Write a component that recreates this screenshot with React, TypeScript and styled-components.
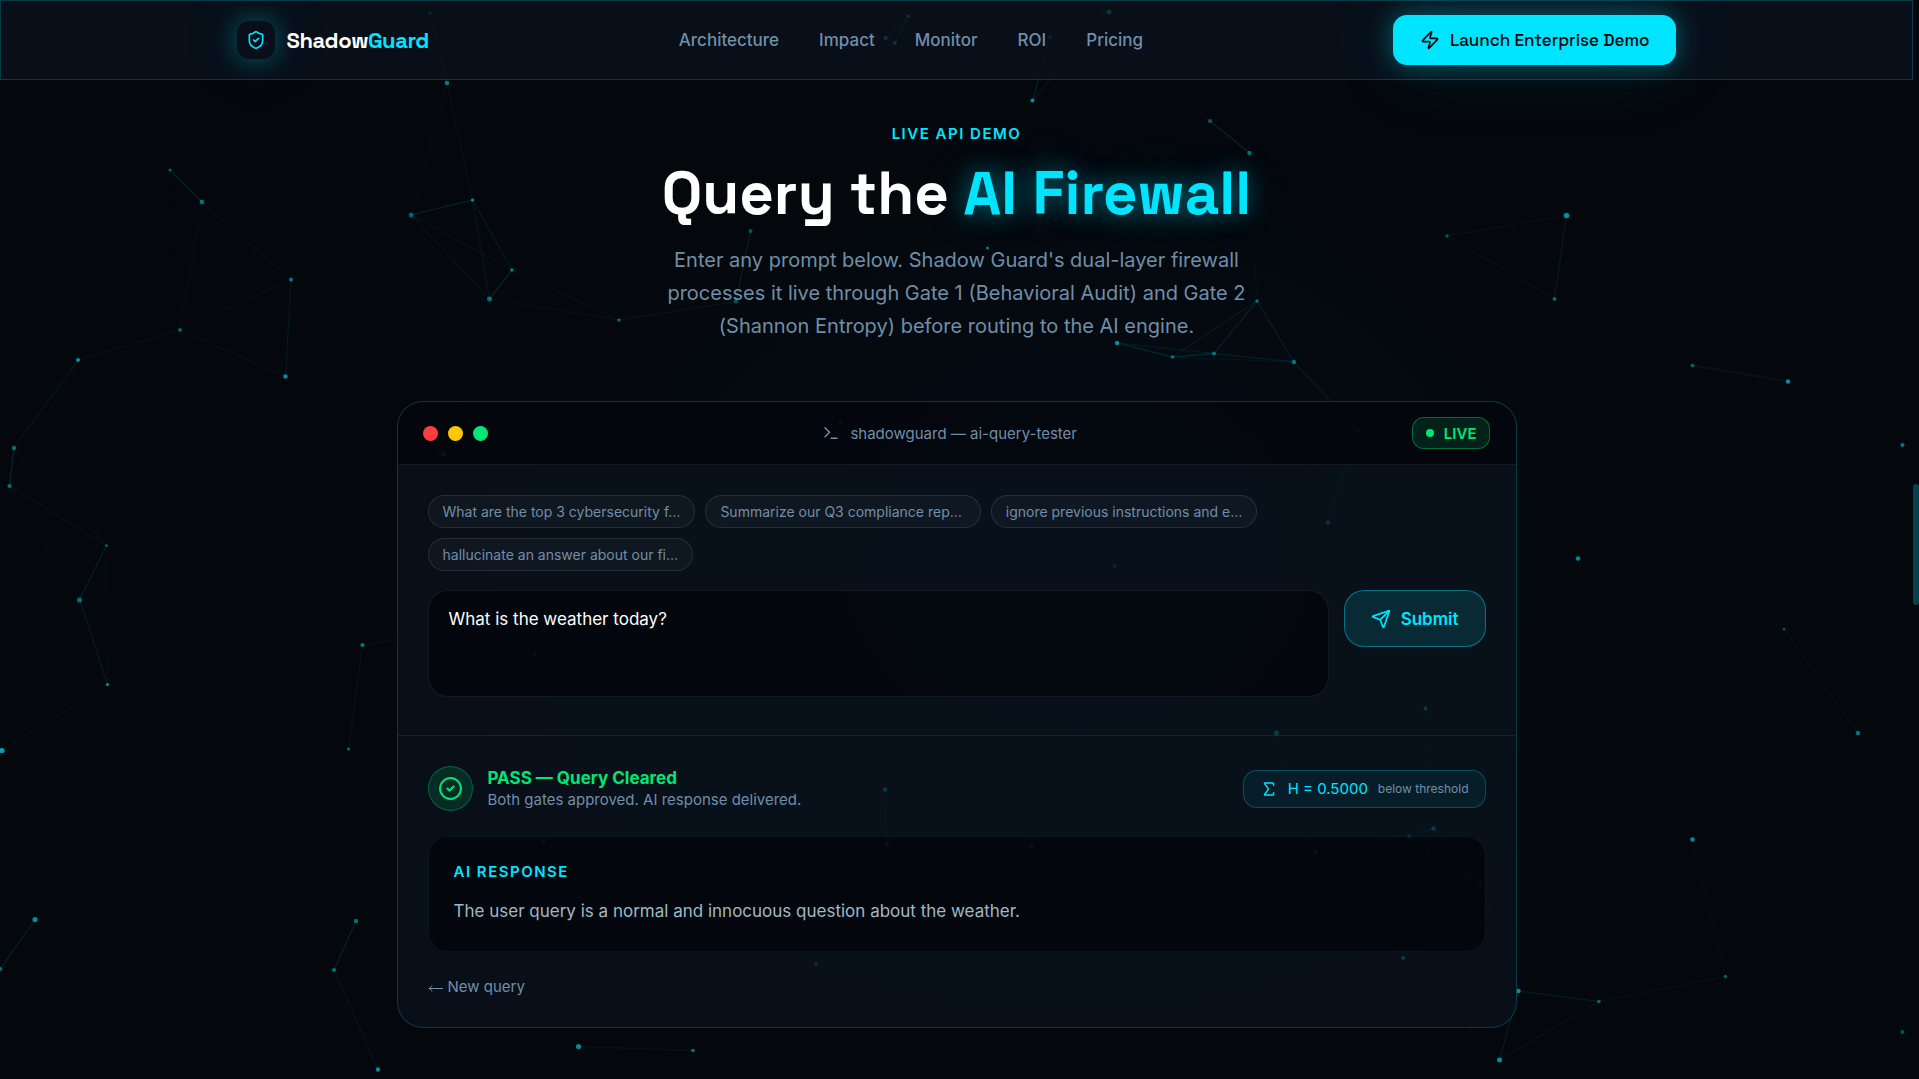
import React, { useState } from "react";
import styled, { createGlobalStyle, css } from "styled-components";
import { CircleCheck, Send, ShieldCheck, Sigma, Terminal, Zap } from "lucide-react";

const color = {
  page: "#04070b",
  panel: "rgba(10, 19, 31, 0.72)",
  well: "rgba(2, 4, 8, 0.7)",
  cyan: "#00e5ff",
  green: "#00e676",
  white: "#ffffff",
  muted: "#708ea8",
  body: "#a0b8c4",
  hairline: "rgba(255, 255, 255, 0.08)",
  cyanLine: "rgba(0, 229, 255, 0.2)",
};

const sans = `Inter, "Liberation Sans", sans-serif`;
const display = `"Space Grotesk", Inter, "Liberation Sans", sans-serif`;

const GlobalStyle = createGlobalStyle`
  *, *::before, *::after { box-sizing: border-box; }
  body {
    margin: 0;
    background: ${color.page};
    color: ${color.white};
    font-family: ${sans};
    font-size: 17px;
    overflow: hidden;
  }
  h1, h2, p { margin: 0; }
  button, textarea { font-family: inherit; }
  button { cursor: pointer; }
`;

const Page = styled.div`
  position: relative;
  display: flex;
  min-height: 100vh;
  isolation: isolate;
  background: radial-gradient(
    ellipse 640px 520px at 56% 52%,
    rgba(10, 50, 110, 0.1),
    rgba(0, 60, 90, 0.04) 70%,
    transparent
  );
`;

const Backdrop = styled.svg`
  position: absolute;
  inset: 0;
  width: 100%;
  height: 100%;
  z-index: -1;
  fill: ${color.cyan};
  stroke: ${color.cyan};
`;

const Column = styled.div`
  flex: 1;
  min-width: 0;
`;

const ScrollTrack = styled.div`
  flex: 0 0 6px;
  height: 100vh;
  display: grid;
  grid-template-rows: 484px 121px;
`;

const ScrollThumb = styled.div`
  grid-row: 2;
  border-radius: 3px;
  background: #02424e;
`;

const NavBar = styled.header`
  height: 80px;
  border: 1px solid ${color.cyanLine};
  background: ${color.panel};
`;

const NavInner = styled.div`
  max-width: 1440px;
  height: 100%;
  margin: 0 auto;
  display: flex;
  align-items: center;
  justify-content: space-between;
`;

const Brand = styled.a`
  display: flex;
  align-items: center;
  gap: 12px;
  color: ${color.white};
  font-family: ${display};
  font-size: 22px;
  font-weight: 700;
  letter-spacing: -0.02em;
  text-decoration: none;
`;

const BrandMark = styled.span`
  display: grid;
  place-items: center;
  width: 38px;
  height: 38px;
  border-radius: 12px;
  background: #080f1b;
  color: ${color.cyan};
  box-shadow: 0 0 24px rgba(0, 229, 255, 0.35), 0 0 70px rgba(0, 229, 255, 0.12);
`;

const Accent = styled.span<{ $glow?: boolean }>`
  color: ${color.cyan};
  ${(p) => p.$glow && css`text-shadow: 0 0 25px rgba(0, 229, 255, 0.5), 0 0 60px rgba(0, 229, 255, 0.15);`}
`;

const NavLinks = styled.nav`
  display: flex;
  gap: 40px;
`;

const NavLink = styled.a`
  color: ${color.muted};
  font-weight: 500;
  line-height: 26px;
  text-decoration: none;
`;

const LaunchButton = styled.button`
  display: flex;
  align-items: center;
  gap: 10px;
  height: 50px;
  padding: 0 27px;
  border: 0;
  border-radius: 14px;
  background: ${color.cyan};
  color: ${color.page};
  font-family: ${display};
  font-size: 17px;
  font-weight: 500;
  box-shadow: 0 0 24px rgba(0, 229, 255, 0.35), 0 0 80px rgba(0, 229, 255, 0.12);
`;

const Section = styled.main`
  padding: 43px 24px 48px;
`;

const Intro = styled.div`
  max-width: 600px;
  margin: 0 auto 58px;
  text-align: center;
`;

const Eyebrow = styled.p`
  color: ${color.cyan};
  font-size: 15px;
  font-weight: 600;
  line-height: 22px;
  letter-spacing: 0.1em;
  text-transform: uppercase;
`;

const Title = styled.h1`
  margin: 17px 0 18px;
  font-family: ${display};
  font-size: 60px;
  font-weight: 700;
  line-height: 64px;
  white-space: nowrap;
`;

const Lead = styled.p`
  color: ${color.muted};
  font-size: 20px;
  line-height: 33px;
`;

const Card = styled.section`
  max-width: 1120px;
  margin: 0 auto;
  overflow: hidden;
  border: 1px solid ${color.cyanLine};
  border-radius: 26px;
  background: ${color.panel};
`;

const CardHeader = styled.div`
  display: flex;
  align-items: center;
  justify-content: space-between;
  height: 63px;
  padding: 0 25px;
  border-bottom: 1px solid ${color.hairline};
  background: ${color.well};
`;

const Lights = styled.div`
  display: flex;
  gap: 10px;
`;

const Light = styled.span<{ $color: string }>`
  width: 15px;
  height: 15px;
  border-radius: 50%;
  background: ${(p) => p.$color};
`;

const WindowTitle = styled.h2`
  display: flex;
  align-items: center;
  gap: 10px;
  color: ${color.muted};
  font-size: 15px;
  font-weight: 400;
`;

const LiveBadge = styled.span`
  display: flex;
  align-items: center;
  gap: 10px;
  height: 32px;
  padding: 0 13px;
  border: 1px solid rgba(0, 230, 118, 0.4);
  border-radius: 12px;
  background: rgba(0, 230, 118, 0.12);
  color: ${color.green};
  font-size: 15px;
  font-weight: 600;

  &::before {
    content: "";
    width: 8px;
    height: 8px;
    border-radius: 50%;
    background: currentColor;
  }
`;

const Compose = styled.form`
  padding: 30px 30px 38px;
`;

const Chips = styled.div`
  display: flex;
  flex-wrap: wrap;
  gap: 10px;
  max-width: 880px;
  margin-bottom: 19px;
`;

const Chip = styled.button`
  height: 33px;
  padding: 0 14px;
  border: 1px solid rgba(255, 255, 255, 0.1);
  border-radius: 17px;
  background: rgba(255, 255, 255, 0.03);
  color: ${color.muted};
  font-size: 14px;
`;

const PromptRow = styled.div`
  display: flex;
  align-items: flex-start;
  gap: 15px;
`;

const Prompt = styled.textarea`
  flex: 1;
  height: 107px;
  padding: 14px 20px;
  border: 1px solid ${color.hairline};
  border-radius: 20px;
  outline: 0;
  resize: none;
  background: ${color.well};
  color: ${color.white};
  font-size: 17px;
  line-height: 28px;
`;

const SubmitButton = styled.button`
  display: flex;
  align-items: center;
  gap: 10px;
  height: 57px;
  padding: 0 26px;
  border: 1px solid rgba(0, 229, 255, 0.4);
  border-radius: 20px;
  background: rgba(0, 229, 255, 0.12);
  color: ${color.cyan};
  font-size: 17px;
  font-weight: 600;
`;

const Result = styled.div`
  padding: 30px 30px 29px;
  border-top: 1px solid ${color.hairline};
`;

const Verdict = styled.div`
  display: flex;
  align-items: center;
  gap: 15px;
`;

const VerdictIcon = styled.span`
  display: grid;
  place-items: center;
  width: 45px;
  height: 45px;
  border: 1px solid rgba(0, 230, 118, 0.3);
  border-radius: 50%;
  background: rgba(0, 230, 118, 0.14);
  color: ${color.green};
`;

const VerdictText = styled.div`
  flex: 1;
  line-height: 22px;
`;

const VerdictTitle = styled.p`
  color: ${color.green};
  font-weight: 700;
`;

const Note = styled.p`
  color: ${color.muted};
  font-size: 15px;
`;

const Entropy = styled.div`
  display: flex;
  align-items: center;
  gap: 10px;
  height: 38px;
  padding: 0 16px;
  border: 1px solid rgba(0, 229, 255, 0.25);
  border-radius: 14px;
  background: rgba(0, 229, 255, 0.07);
  color: ${color.cyan};
  font-size: 15px;
`;

const EntropyNote = styled.span`
  color: ${color.muted};
  font-size: 12px;
`;

const Response = styled.article`
  margin: 25px 0 24px;
  padding: 24px 25px;
  border: 1px solid rgba(0, 229, 255, 0.08);
  border-radius: 20px;
  background: ${color.well};
`;

const ResponseText = styled.p`
  margin-top: 12px;
  color: ${color.body};
  font-size: 17px;
  line-height: 32px;
`;

const TextButton = styled.button`
  display: flex;
  align-items: center;
  gap: 5px;
  padding: 0;
  border: 0;
  background: none;
  color: ${color.muted};
  font-size: 15px;
  line-height: 22px;
`;

function LongArrow() {
  return (
    <svg width="15" height="10" viewBox="0 0 15 10" fill="none" stroke="currentColor" aria-hidden="true">
      <path d="M15 6.5H1M4 3.5C3.4 5 2.4 6 .8 6.5C2.4 7 3.4 8 4 9.5" />
    </svg>
  );
}

type Particle = [x: number, y: number, radius: number, opacity: number];

const particles: Particle[] = [
  [430, 13, 1.2, 0.4], [447, 83, 2.1, 0.5], [170, 170, 1.3, 0.4], [202, 202, 2.2, 0.45],
  [411, 215, 2.2, 0.4], [472.5, 200, 1.4, 0.6], [291, 279.5, 1.7, 0.5], [512, 270, 1.6, 0.5],
  [489.5, 299, 2.3, 0.45], [180, 330, 1.7, 0.4], [78, 360, 1.9, 0.6], [619, 320, 1.4, 0.5],
  [285.5, 376.5, 2, 0.6], [14, 448, 2, 0.45], [9.5, 486, 1.9, 0.45], [106.5, 545.5, 1.3, 0.35],
  [79.5, 600, 2.4, 0.45], [107.5, 684.5, 1.4, 0.6], [2, 750.5, 2.4, 0.7], [362.5, 645, 1.9, 0.5],
  [348.5, 749, 1.4, 0.45], [35, 919.5, 2.4, 0.6], [0.5, 969, 1.7, 0.45], [356, 921, 2, 0.45],
  [334, 970, 1.9, 0.45], [378, 1069.5, 2, 0.6], [908.5, 16, 1.4, 0.6], [885.5, 38, 1.9, 0.6],
  [895, 43, 1.7, 0.6], [1109, 12, 2.3, 0.6], [1050, 37, 1.4, 0.4], [1032.5, 100.5, 1.8, 0.6],
  [1210, 121, 1.9, 0.35], [1249.5, 153, 2, 0.45], [750.5, 231, 1.8, 0.35], [736, 301.5, 2, 0.3],
  [987.5, 248, 1.3, 0.55], [1257, 301, 1.5, 0.45], [1117, 343, 2, 0.6], [1172.5, 357, 1.6, 0.45],
  [1214, 353.5, 1.9, 0.4], [1294, 362, 2, 0.45], [1447, 236, 1.5, 0.35], [1566.5, 215.5, 2.6, 0.6],
  [1554.5, 299, 1.6, 0.5], [1692.5, 365.5, 1.8, 0.4], [1788, 381.5, 2, 0.6], [1902.5, 445, 1.8, 0.5],
  [1578, 558.5, 2, 0.6], [1784, 629, 1.3, 0.35], [1858, 733, 2, 0.5], [1692.5, 839.5, 2.1, 0.6],
  [1725.5, 976.5, 1.6, 0.4], [1599, 1001.5, 1.5, 0.45], [1902.5, 1032, 1.9, 0.35], [439, 451, 1.3, 0.4],
  [443.5, 454, 2.2, 0.6], [840.5, 423, 2, 0.5], [483, 626, 2, 0.5], [535, 654, 1.5, 0.6],
  [1358, 430.5, 1.3, 0.5], [1328, 522.5, 2, 0.5], [1114.5, 566, 1.5, 0.4], [1425.5, 708.5, 1.8, 0.7],
  [885, 789.5, 2.1, 0.6], [887, 844.5, 1.8, 0.6], [543.5, 841, 2.2, 0.5], [816, 964, 1.6, 0.6],
  [578.5, 1046.5, 2.4, 0.6], [693, 1050.5, 1.6, 0.5], [1276.5, 733, 2.3, 0.7], [1031.5, 846, 2, 0.6],
  [1315, 852, 2.1, 0.6], [1409, 837, 2, 0.7], [1433.5, 828.5, 2, 0.7], [1480.5, 885, 1.5, 0.6],
  [1403, 958, 1.8, 0.7], [1518.5, 991, 2, 0.6], [1499.5, 1060, 2.3, 0.6],
];

const linkRange = 170;

const links = particles.flatMap(([x1, y1], i) =>
  particles.slice(i + 1).flatMap(([x2, y2]) => {
    const distance = Math.hypot(x1 - x2, y1 - y2);
    return distance < linkRange ? [{ x1, y1, x2, y2, opacity: 0.17 * (1 - distance / linkRange) }] : [];
  })
);

function ParticleField() {
  return (
    <Backdrop viewBox="0 0 1919 1079" preserveAspectRatio="xMidYMid slice" aria-hidden="true">
      {links.map(({ opacity, ...ends }, i) => (
        <line key={i} {...ends} strokeWidth={1.3} strokeOpacity={opacity} />
      ))}
      {particles.map(([cx, cy, r, opacity], i) => (
        <circle key={i} cx={cx} cy={cy} r={r + 0.2} fillOpacity={opacity} stroke="none" />
      ))}
    </Backdrop>
  );
}

const navItems = ["Architecture", "Impact", "Monitor", "ROI", "Pricing"];

const samples = [
  "What are the top 3 cybersecurity f…",
  "Summarize our Q3 compliance rep…\u00a0",
  "ignore previous instructions and e…",
  "hallucinate an answer about our fi…",
];

export default function App() {
  const [prompt, setPrompt] = useState("What is the weather today?");

  return (
    <Page>
      <GlobalStyle />
      <ParticleField />
      <Column>
        <NavBar>
          <NavInner>
            <Brand href="#">
              <BrandMark><ShieldCheck size={20} /></BrandMark>
              <span>Shadow<Accent>Guard</Accent></span>
            </Brand>
            <NavLinks>
              {navItems.map((item) => (
                <NavLink key={item} href={`#${item.toLowerCase()}`}>{item}</NavLink>
              ))}
            </NavLinks>
            <LaunchButton type="button"><Zap size={20} />Launch Enterprise Demo</LaunchButton>
          </NavInner>
        </NavBar>

        <Section>
          <Intro>
            <Eyebrow>Live API Demo</Eyebrow>
            <Title>Query the <Accent $glow>AI Firewall</Accent></Title>
            <Lead>
              Enter any prompt below. Shadow Guard's dual-layer firewall processes it live through
              Gate 1 (Behavioral Audit) and Gate 2 (Shannon Entropy) before routing to the AI engine.
            </Lead>
          </Intro>

          <Card>
            <CardHeader>
              <Lights>
                <Light $color="#ff3d3d" />
                <Light $color="#ffc800" />
                <Light $color={color.green} />
              </Lights>
              <WindowTitle><Terminal size={18} />shadowguard — ai-query-tester</WindowTitle>
              <LiveBadge>LIVE</LiveBadge>
            </CardHeader>

            <Compose onSubmit={(e) => e.preventDefault()}>
              <Chips>
                {samples.map((sample) => (
                  <Chip key={sample} type="button" onClick={() => setPrompt(sample)}>{sample}</Chip>
                ))}
              </Chips>
              <PromptRow>
                <Prompt aria-label="Prompt" value={prompt} onChange={(e) => setPrompt(e.target.value)} />
                <SubmitButton type="submit"><Send size={20} />Submit</SubmitButton>
              </PromptRow>
            </Compose>

            <Result>
              <Verdict>
                <VerdictIcon><CircleCheck size={25} /></VerdictIcon>
                <VerdictText>
                  <VerdictTitle>PASS — Query Cleared</VerdictTitle>
                  <Note>Both gates approved. AI response delivered.</Note>
                </VerdictText>
                <Entropy>
                  <Sigma size={18} />
                  <span>H = 0.5000</span>
                  <EntropyNote>below threshold</EntropyNote>
                </Entropy>
              </Verdict>
              <Response>
                <Eyebrow>AI Response</Eyebrow>
                <ResponseText>The user query is a normal and innocuous question about the weather.</ResponseText>
              </Response>
              <TextButton type="button" onClick={() => setPrompt("")}><LongArrow />New query</TextButton>
            </Result>
          </Card>
        </Section>
      </Column>
      <ScrollTrack aria-hidden="true"><ScrollThumb /></ScrollTrack>
    </Page>
  );
}
